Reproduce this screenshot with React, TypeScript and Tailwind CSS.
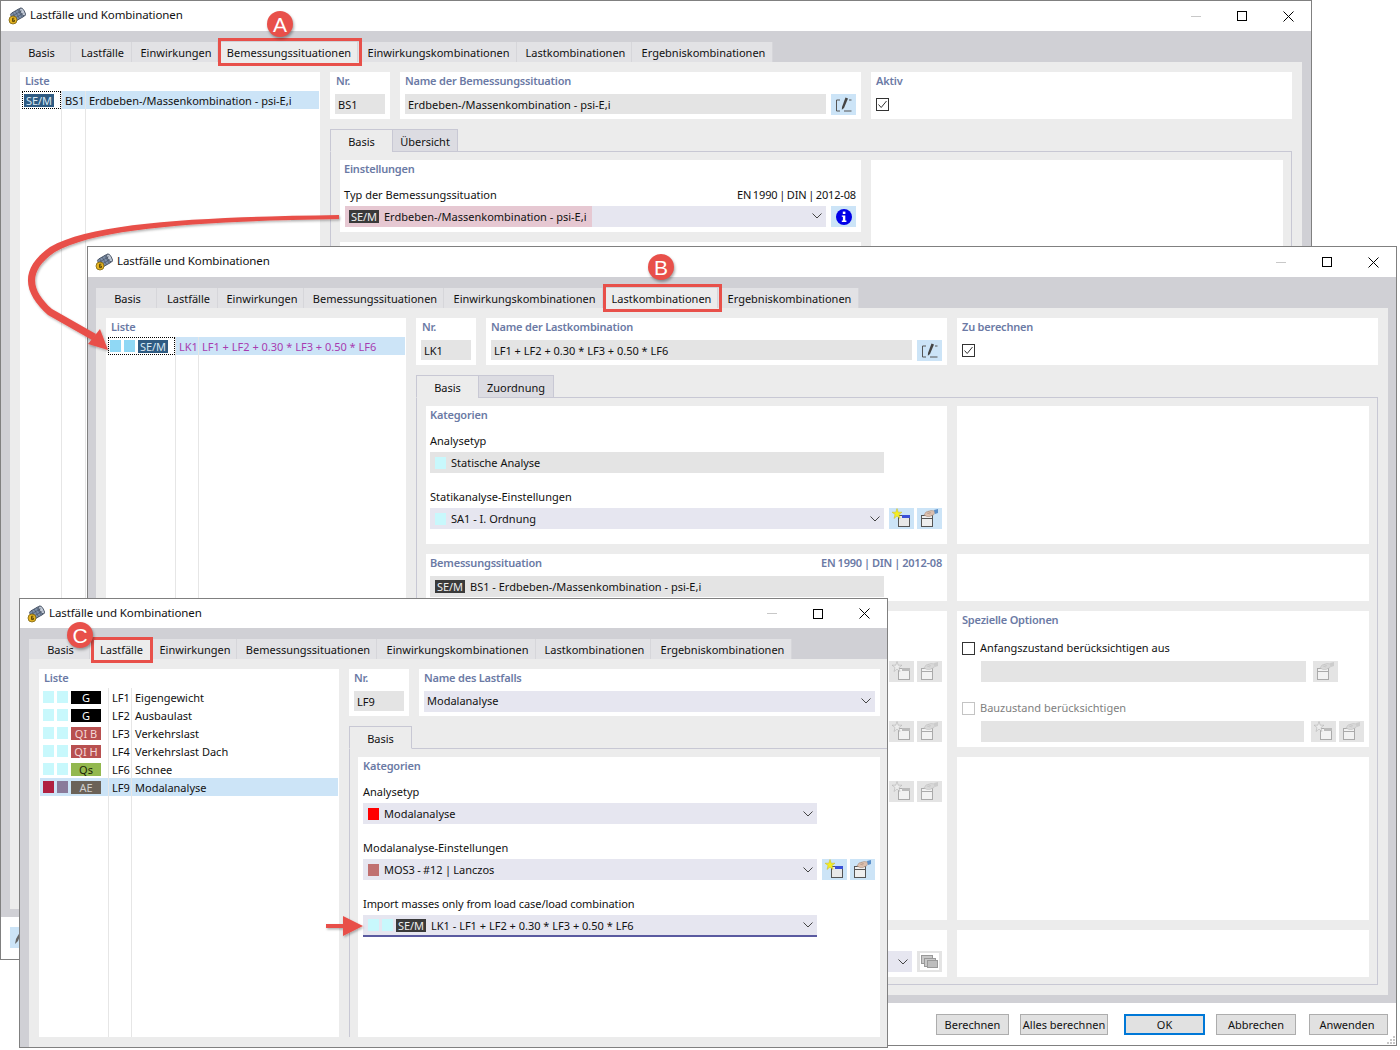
import type { ReactNode } from "react";
import clsx from "clsx";

const tabs = [
  { label: "Basis", width: "w-[61px]" },
  { label: "Lastfälle", width: "w-[61px]" },
  { label: "Einwirkungen", width: "w-[86px]" },
  { label: "Bemessungssituationen", width: "w-[140px]" },
  { label: "Einwirkungskombinationen", width: "w-[159px]" },
  { label: "Lastkombinationen", width: "w-[115px]" },
  { label: "Ergebniskombinationen", width: "w-[141px]" },
];

function AppIcon() {
  return (
    <svg width="18" height="18" viewBox="0 0 18 18" className="shrink-0">
      <g transform="rotate(-30 10 7)">
        <rect x="3" y="3" width="13" height="9" rx="2" fill="#7d8fa8" stroke="#3f4a5c" strokeWidth="0.8" />
        <ellipse cx="15" cy="7.5" rx="2" ry="4.5" fill="#c4ccd8" stroke="#3f4a5c" strokeWidth="0.8" />
        <path d="M6 3v9M9 3v9M12 3v9M3 6h12M3 9h12" stroke="#3f4a5c" strokeWidth="0.5" />
      </g>
      <circle cx="5" cy="13" r="4" fill="#e6b422" stroke="#7a6212" strokeWidth="0.8" />
      <path d="M6.4 11.2H4.6v3.4h1.8v-1.6H4.6" fill="none" stroke="#4a3c08" strokeWidth="0.9" />
    </svg>
  );
}

function Chevron() {
  return (
    <svg width="10" height="6" viewBox="0 0 10 6" className="shrink-0">
      <path d="M0.5 0.5L5 5L9.5 0.5" fill="none" stroke="#444" strokeWidth="1" />
    </svg>
  );
}

function PencilIcon() {
  return (
    <svg width="18" height="16" viewBox="0 0 18 16">
      <path d="M5 3H1.5V14H5M9 14H16.5M14 3H16.5" fill="none" stroke="#555" strokeWidth="1" />
      <path d="M10.5 0.5L13 1.5L9 11L6.8 12.8L7 10Z" fill="#444" />
    </svg>
  );
}

function InfoIcon() {
  return (
    <svg width="16" height="16" viewBox="0 0 16 16">
      <circle cx="8" cy="8" r="8" fill="#0000e8" />
      <rect x="6.8" y="2.6" width="2.6" height="2.4" fill="#fff" />
      <path d="M5.8 6.4H9.3V11.6H10.4V13H5.8V11.6H6.9V7.8H5.8Z" fill="#fff" />
    </svg>
  );
}

function NewIcon({ off }: { off?: boolean }) {
  const line = off ? "#aaa" : "#555";
  return (
    <svg width="25" height="21" viewBox="0 0 25 21">
      <rect x="9.5" y="7.5" width="11" height="11" fill={off ? "#f2f2f2" : "#e8e8e8"} stroke={line} />
      <rect x="13" y="7" width="8" height="3" fill={off ? "#bbb" : "#3a50d8"} />
      <path
        d="M8 0.5L9.2 4.2L13 4.2L10 6.5L11 10.5L8 8L5 10.5L6 6.5L3 4.2L6.8 4.2Z"
        fill={off ? "#ececec" : "#f5ee20"}
        stroke={off ? "#aaa" : "#c8b820"}
        strokeWidth="0.5"
      />
    </svg>
  );
}

function EditWindowIcon({ off }: { off?: boolean }) {
  const line = off ? "#aaa" : "#555";
  return (
    <svg width="25" height="21" viewBox="0 0 25 21">
      <rect x="4.5" y="7.5" width="11" height="11" fill={off ? "#f2f2f2" : "#efefef"} stroke={line} />
      <rect x="5" y="10" width="10" height="1" fill={line} />
      <path d="M7 7L9 4L14 2.5L18 3L17 6.5L13 8.5L10 8.5Z" fill={off ? "#d8d8d8" : "#dcbfae"} stroke={off ? "#bbb" : "#a08674"} strokeWidth="0.5" />
      <path d="M10 5L13 6M11 3.5L14 5" stroke={off ? "#bbb" : "#a08674"} strokeWidth="0.5" />
      <path d="M17 2L21 1V5L18 6Z" fill={off ? "#ccc" : "#5b8fc9"} />
    </svg>
  );
}

function CopyIcon() {
  return (
    <svg width="19" height="17" viewBox="0 0 19 17">
      <rect x="0" y="0" width="19" height="17" fill="#fff" />
      <rect x="1.5" y="2.5" width="11" height="8" fill="#c8c8c8" stroke="#999" />
      <rect x="4.5" y="5.5" width="11" height="8" fill="#c8c8c8" stroke="#999" />
      <rect x="7.5" y="7.5" width="10" height="7" fill="#bdbdbd" stroke="#999" />
    </svg>
  );
}

function Swatch({ color }: { color: string }) {
  return <span className={clsx("mb-[2px] h-[12px] w-[11px] shrink-0", color)} />;
}

function Badge({ className, children }: { className: string; children: ReactNode }) {
  return (
    <span className={clsx("mb-[2px] flex h-[13px] w-[30px] shrink-0 items-center justify-center text-[11px] leading-none", className)}>
      {children}
    </span>
  );
}

function Heading({ className, children }: { className?: string; children: ReactNode }) {
  return (
    <div className={clsx("h-[16px] text-[11px] font-semibold leading-[16px] tracking-[-0.2px] text-[#6b7aa5]", className)}>
      {children}
    </div>
  );
}

function TopHeading({ children }: { children: ReactNode }) {
  return <div className="h-[19px] text-[11px] font-semibold leading-[17px] tracking-[-0.2px] text-[#6b7aa5]">{children}</div>;
}

function Label({ className, children }: { className?: string; children: ReactNode }) {
  return <div className={clsx("h-[16px] leading-[16px]", className)}>{children}</div>;
}

function Box({ className, children }: { className?: string; children?: ReactNode }) {
  return <div className={clsx("flex h-[21px] items-center gap-[5px] bg-[#e4e4e4] pl-[5px] pt-[2px]", className)}>{children}</div>;
}

function Select({ className, children }: { className?: string; children?: ReactNode }) {
  return (
    <div className={clsx("flex h-[21px] items-center gap-[5px] bg-[#e6e6f0] pl-[5px] pr-[4px] pt-[2px]", className)}>
      {children}
      <span className="mb-[2px] ml-auto flex">
        <Chevron />
      </span>
    </div>
  );
}

function IconButton({ off, children }: { off?: boolean; children: ReactNode }) {
  return (
    <div className={clsx("flex h-[21px] w-[25px] shrink-0 items-center justify-center", off ? "bg-[#e4e4e4]" : "bg-[#cce4f7]")}>
      {children}
    </div>
  );
}

function CheckBox({ checked, off }: { checked?: boolean; off?: boolean }) {
  return (
    <span className={clsx("flex h-[13px] w-[13px] shrink-0 items-center justify-center border bg-white", off ? "border-[#c4c4c4]" : "border-[#333]")}>
      {checked && (
        <svg width="11" height="11" viewBox="0 0 11 11">
          <path d="M1.5 5.5L4.2 8.5L9.5 2" fill="none" stroke="#333" strokeWidth="1" />
        </svg>
      )}
    </span>
  );
}

function ListColumn({ className, children }: { className: string; children: ReactNode }) {
  return <div className={clsx("flex flex-col border-r border-[#e6e6e6]", className)}>{children}</div>;
}

function Cell({ selected, className, children }: { selected?: boolean; className?: string; children?: ReactNode }) {
  return (
    <div className={clsx("flex h-[18px] shrink-0 items-center whitespace-nowrap pl-[3px] pt-[2px]", selected && "bg-[#cce4f7]", className)}>
      {children}
    </div>
  );
}

function ListPanel({ padding, children }: { padding: string; children: ReactNode }) {
  return (
    <div className="flex w-[300px] shrink-0 flex-col bg-white">
      <div className="pl-[5px]">
        <TopHeading>Liste</TopHeading>
      </div>
      <div className={clsx("flex min-h-0 flex-1", padding)}>{children}</div>
    </div>
  );
}

function Dialog({
  className,
  active,
  titleHeight = "h-[30px]",
  band,
  footer,
  children,
}: {
  className: string;
  active: number;
  titleHeight?: string;
  band: string;
  footer?: ReactNode;
  children: ReactNode;
}) {
  return (
    <div className={clsx("absolute flex flex-col overflow-hidden border border-[#808080] bg-white", className)}>
      <div className={clsx("flex shrink-0 items-center bg-white pl-[7px]", titleHeight)}>
        <AppIcon />
        <span className="mb-[2px] ml-[4px] text-[11.5px] tracking-[-0.1px]">Lastfälle und Kombinationen</span>
        <div className="ml-auto flex items-center">
          <span className="flex w-[46px] justify-center">
            <span className="h-px w-[10px] bg-[#c8c8c8]" />
          </span>
          <span className="flex w-[46px] justify-center">
            <span className="h-[10px] w-[10px] border border-black" />
          </span>
          <span className="flex w-[46px] justify-center">
            <svg width="11" height="11" viewBox="0 0 11 11">
              <path d="M0.5 0.5L10.5 10.5M10.5 0.5L0.5 10.5" stroke="#000" strokeWidth="1" />
            </svg>
          </span>
        </div>
      </div>
      <div className={clsx("flex min-h-0 flex-1 flex-col bg-[#d0d0d5] pt-[11px]", band)}>
        <div className="flex h-[20px] shrink-0">
          {tabs.map((tab, i) => (
            <div
              key={tab.label}
              className={clsx(
                "flex shrink-0 items-center justify-center border-r border-[#d6d6da] pl-[3px] pt-[2px]",
                tab.width,
                i === active ? "bg-[#ececec]" : "bg-[#e2e2e5]"
              )}
            >
              {tab.label}
            </div>
          ))}
        </div>
        <div className="flex min-h-0 flex-1 gap-[10px] bg-[#ececec] py-[10px] pl-[10px]">{children}</div>
      </div>
      {footer}
    </div>
  );
}

function SubTabs({ items }: { items: { label: string; width: string }[] }) {
  return (
    <div className="relative z-10 -mb-px flex h-[23px] shrink-0">
      {items.map((item, i) => (
        <div
          key={item.label}
          className={clsx(
            "flex items-center justify-center border border-[#c8c8d4] pt-[4px]",
            item.width,
            i === 0 ? "border-b-[#ececec] bg-[#ececec]" : "-ml-px bg-[#dcdce2]"
          )}
        >
          {item.label}
        </div>
      ))}
    </div>
  );
}

function WindowA() {
  return (
    <Dialog
      className="left-0 top-0 h-[960px] w-[1312px]"
      active={3}
      band="px-[9px] pb-[8px]"
      footer={
        <div className="h-[42px] shrink-0 bg-white pl-[9px] pt-[10px]">
          <div className="flex h-[21px] w-[25px] items-center justify-end bg-[#cce4f7] pr-[14px]">
            <svg width="6" height="12" viewBox="0 0 6 12">
              <path d="M5 0L6 1L3 9L0 12L1 7Z" fill="#666" />
            </svg>
          </div>
        </div>
      }
    >
      <ListPanel padding="pl-[2px] pr-[1px]">
        <ListColumn className="w-[40px]">
          <div className="flex h-[18px] items-center border border-dotted border-black pl-px pt-[2px]">
            <Badge className="bg-[#2f5b82] text-[#d8e8f4]">SE/M</Badge>
          </div>
        </ListColumn>
        <ListColumn className="w-[24px]">
          <Cell selected>BS1</Cell>
        </ListColumn>
        <div className="flex flex-1 flex-col">
          <Cell selected>Erdbeben-/Massenkombination - psi-E,i</Cell>
        </div>
      </ListPanel>
      <div className="flex w-[962px] shrink-0 flex-col">
        <div className="flex h-[47px] shrink-0 gap-[10px]">
          <div className="w-[60px] bg-white px-[5px] pl-[6px]">
            <TopHeading>Nr.</TopHeading>
            <Box className="-ml-px mt-[3px] !h-[20px] !pl-[3px]">BS1</Box>
          </div>
          <div className="w-[461px] bg-white px-[5px]">
            <TopHeading>Name der Bemessungssituation</TopHeading>
            <div className="mt-[3px] flex gap-[5px]">
              <Box className="!h-[20px] w-[421px] !pl-[3px]">Erdbeben-/Massenkombination - psi-E,i</Box>
              <IconButton>
                <PencilIcon />
              </IconButton>
            </div>
          </div>
          <div className="w-[421px] bg-white px-[5px]">
            <TopHeading>Aktiv</TopHeading>
            <div className="mt-[7px]">
              <CheckBox checked />
            </div>
          </div>
        </div>
        <div className="mt-[10px] flex min-h-0 flex-1 flex-col">
          <SubTabs
            items={[
              { label: "Basis", width: "w-[63px]" },
              { label: "Übersicht", width: "w-[66px]" },
            ]}
          />
          <div className="flex min-h-0 flex-1 gap-[10px] border border-[#c8c8d4] pb-[8px] pl-[9px] pr-[8px] pt-[8px]">
            <div className="flex w-[521px] flex-col gap-[10px]">
              <div className="h-[72px] shrink-0 bg-white px-[4px] pt-px">
                <Heading>Einstellungen</Heading>
                <div className="mt-[10px] flex justify-between pr-px">
                  <Label>Typ der Bemessungssituation</Label>
                  <Label className="tracking-[-0.15px] [word-spacing:-1px]">EN 1990 | DIN | 2012-08</Label>
                </div>
                <div className="mt-[3px] flex gap-[5px] pl-px">
                  <Select className="relative w-[481px] !pl-0 !pt-0">
                    <div className="flex h-[21px] w-[247px] items-center gap-[5px] bg-[#e6c8d2] pl-[4px] pt-[2px]">
                      <Badge className="bg-[#3a3a3a] text-[#eee]">SE/M</Badge>
                      Erdbeben-/Massenkombination - psi-E,i
                    </div>
                  </Select>
                  <IconButton>
                    <InfoIcon />
                  </IconButton>
                </div>
              </div>
              <div className="flex-1 bg-white" />
            </div>
            <div className="w-[412px] bg-white" />
          </div>
        </div>
      </div>
    </Dialog>
  );
}

function WindowB() {
  const footerButton = "flex h-[21px] items-center justify-center border border-[#adadad] bg-[#e1e1e1] pt-[2px]";
  return (
    <Dialog
      className="left-[87px] top-[246px] h-[800px] w-[1310px]"
      active={5}
      band="px-[8px] pb-[8px]"
      footer={
        <div className="relative flex h-[42px] shrink-0 justify-end bg-white pr-[8px] pt-[11px]">
          <div className={clsx(footerButton, "w-[73px]")}>Berechnen</div>
          <div className={clsx(footerButton, "ml-[11px] w-[88px]")}>Alles berechnen</div>
          <div className="ml-[16px] flex h-[21px] w-[81px] items-center justify-center border-2 border-[#0078d7] bg-[#e1e1e1] pt-[2px]">OK</div>
          <div className={clsx(footerButton, "ml-[11px] w-[80px]")}>Abbrechen</div>
          <div className={clsx(footerButton, "ml-[13px] w-[79px] pr-[3px]")}>Anwenden</div>
          <svg width="9" height="9" viewBox="0 0 9 9" className="absolute bottom-px right-px">
            <path d="M7 1h2v2H7zM4 4h2v2H4zM7 4h2v2H7zM1 7h2v2H1zM4 7h2v2H4zM7 7h2v2H7z" fill="#c8c8c8" />
          </svg>
        </div>
      }
    >
      <ListPanel padding="pl-[2px] pr-px">
        <ListColumn className="w-[68px]">
          <div className="flex h-[18px] items-center gap-[3px] border border-dotted border-black pl-px pt-[2px]">
            <Swatch color="bg-[#90d8f5]" />
            <Swatch color="bg-[#90d8f5]" />
            <Badge className="bg-[#2f5b82] text-[#d8e8f4]">SE/M</Badge>
          </div>
        </ListColumn>
        <ListColumn className="w-[23px]">
          <Cell selected className="text-[#a83cb0]">
            LK1
          </Cell>
        </ListColumn>
        <div className="flex flex-1 flex-col">
          <Cell selected className="text-[#a83cb0]">
            LF1 + LF2 + 0.30 * LF3 + 0.50 * LF6
          </Cell>
        </div>
      </ListPanel>
      <div className="flex w-[962px] shrink-0 flex-col">
        <div className="flex h-[47px] shrink-0 gap-[10px]">
          <div className="w-[60px] bg-white px-[5px] pl-[6px]">
            <TopHeading>Nr.</TopHeading>
            <Box className="-ml-px mt-[3px] !h-[20px] !pl-[3px]">LK1</Box>
          </div>
          <div className="w-[461px] bg-white px-[5px]">
            <TopHeading>Name der Lastkombination</TopHeading>
            <div className="mt-[3px] flex gap-[5px]">
              <Box className="!h-[20px] w-[421px] !pl-[3px]">LF1 + LF2 + 0.30 * LF3 + 0.50 * LF6</Box>
              <IconButton>
                <PencilIcon />
              </IconButton>
            </div>
          </div>
          <div className="w-[421px] bg-white px-[5px]">
            <TopHeading>Zu berechnen</TopHeading>
            <div className="mt-[7px]">
              <CheckBox checked />
            </div>
          </div>
        </div>
        <div className="mt-[10px] flex min-h-0 flex-1 flex-col">
          <SubTabs
            items={[
              { label: "Basis", width: "w-[63px]" },
              { label: "Zuordnung", width: "w-[76px]" },
            ]}
          />
          <div className="flex min-h-0 flex-1 gap-[10px] border border-[#c8c8d4] pb-[7px] pl-[9px] pr-[8px] pt-[8px]">
            <div className="flex w-[521px] flex-col gap-[10px]">
              <div className="h-[138px] shrink-0 bg-white px-[4px] pt-px">
                <Heading>Kategorien</Heading>
                <Label className="mt-[10px]">Analysetyp</Label>
                <Box className="mt-[3px] w-[454px]">
                  <Swatch color="bg-[#c8f8fc]" />
                  Statische Analyse
                </Box>
                <Label className="mt-[16px]">Statikanalyse-Einstellungen</Label>
                <div className="mt-[3px] flex gap-[3px]">
                  <Select className="mr-[2px] w-[454px]">
                    <Swatch color="bg-[#c8f8fc]" />
                    SA1 - I. Ordnung
                  </Select>
                  <IconButton>
                    <NewIcon />
                  </IconButton>
                  <IconButton>
                    <EditWindowIcon />
                  </IconButton>
                </div>
              </div>
              <div className="h-[47px] shrink-0 bg-white px-[4px] pt-px">
                <div className="flex justify-between pr-px">
                  <Heading>Bemessungssituation</Heading>
                  <Heading className="[word-spacing:-0.6px]">EN 1990 | DIN | 2012-08</Heading>
                </div>
                <Box className="mt-[5px] w-[454px]">
                  <Badge className="bg-[#3a3a3a] text-[#eee]">SE/M</Badge>
                  BS1 - Erdbeben-/Massenkombination - psi-E,i
                </Box>
              </div>
              <div className="flex h-[309px] shrink-0 flex-col items-end gap-[39px] bg-white pr-[5px] pt-[50px]">
                {[0, 1, 2].map((row) => (
                  <div key={row} className="flex gap-[3px]">
                    <IconButton off>
                      <NewIcon off />
                    </IconButton>
                    <IconButton off>
                      <EditWindowIcon off />
                    </IconButton>
                  </div>
                ))}
              </div>
              <div className="flex flex-1 items-end justify-end gap-[5px] bg-white pb-[5px] pr-[5px]">
                <Select className="w-[454px]" />
                <IconButton off>
                  <CopyIcon />
                </IconButton>
              </div>
            </div>
            <div className="flex w-[412px] flex-col gap-[10px]">
              <div className="h-[138px] shrink-0 bg-white" />
              <div className="h-[47px] shrink-0 bg-white" />
              <div className="h-[136px] shrink-0 bg-white px-[5px] pt-px">
                <Heading>Spezielle Optionen</Heading>
                <div className="mt-[12px] flex h-[16px] items-center gap-[5px]">
                  <CheckBox />
                  Anfangszustand berücksichtigen aus
                </div>
                <div className="mt-[5px] flex gap-[7px] pl-[19px]">
                  <Box className="w-[325px]" />
                  <IconButton off>
                    <EditWindowIcon off />
                  </IconButton>
                </div>
                <div className="mt-[18px] flex h-[16px] items-center gap-[5px] text-[#808080]">
                  <CheckBox off />
                  Bauzustand berücksichtigen
                </div>
                <div className="mt-[5px] flex gap-[7px] pl-[19px]">
                  <Box className="w-[325px]" />
                  <div className="flex gap-[3px]">
                    <IconButton off>
                      <NewIcon off />
                    </IconButton>
                    <IconButton off>
                      <EditWindowIcon off />
                    </IconButton>
                  </div>
                </div>
              </div>
              <div className="h-[163px] shrink-0 bg-white" />
              <div className="flex-1 bg-white" />
            </div>
          </div>
        </div>
      </div>
    </Dialog>
  );
}

const loadCases = [
  { id: "LF1", name: "Eigengewicht", code: "G", badge: "bg-black text-white" },
  { id: "LF2", name: "Ausbaulast", code: "G", badge: "bg-black text-white" },
  { id: "LF3", name: "Verkehrslast", code: "QI B", badge: "bg-[#b85050] text-[#f4d8d8]" },
  { id: "LF4", name: "Verkehrslast Dach", code: "QI H", badge: "bg-[#b85050] text-[#f4d8d8]" },
  { id: "LF6", name: "Schnee", code: "Qs", badge: "bg-[#93b84f] text-[#1c2408]" },
  { id: "LF9", name: "Modalanalyse", code: "AE", badge: "bg-[#6b6258] text-[#d0d0d0]" },
];

function WindowC() {
  return (
    <Dialog
      className="left-[19px] top-[598px] h-[450px] w-[869px]"
      active={1}
      titleHeight="h-[29px]"
      band="pl-[9px]"
    >
      <ListPanel padding="pl-px pr-px">
        <ListColumn className="w-[69px]">
          {loadCases.map((lc) => {
            const selected = lc.id === "LF9";
            return (
              <Cell key={lc.id} selected={selected} className="gap-[3px]">
                <Swatch color={selected ? "bg-[#b02040]" : "bg-[#c8f8fc]"} />
                <Swatch color={selected ? "bg-[#8a7a9a]" : "bg-[#c8f8fc]"} />
                <Badge className={lc.badge}>{lc.code}</Badge>
              </Cell>
            );
          })}
        </ListColumn>
        <ListColumn className="w-[23px]">
          {loadCases.map((lc) => (
            <Cell key={lc.id} selected={lc.id === "LF9"}>
              {lc.id}
            </Cell>
          ))}
        </ListColumn>
        <div className="flex flex-1 flex-col">
          {loadCases.map((lc) => (
            <Cell key={lc.id} selected={lc.id === "LF9"}>
              {lc.name}
            </Cell>
          ))}
        </div>
      </ListPanel>
      <div className="flex w-[538px] shrink-0 flex-col">
        <div className="flex h-[47px] shrink-0 gap-[10px]">
          <div className="w-[60px] bg-white px-[5px]">
            <TopHeading>Nr.</TopHeading>
            <Box className="mt-[3px] !h-[20px] !pl-[3px]">LF9</Box>
          </div>
          <div className="w-[461px] bg-white px-[5px]">
            <TopHeading>Name des Lastfalls</TopHeading>
            <Select className="mt-[3px] !pl-[3px] !pt-0">Modalanalyse</Select>
          </div>
        </div>
        <div className="mt-[10px] flex min-h-0 flex-1 flex-col">
          <SubTabs items={[{ label: "Basis", width: "w-[63px]" }]} />
          <div className="flex min-h-0 flex-1 border-l border-t border-[#c8c8d4] pl-[8px] pt-[8px]">
            <div className="h-full w-[522px] bg-white px-[5px] pt-px">
              <Heading>Kategorien</Heading>
              <Label className="mt-[10px]">Analysetyp</Label>
              <Select className="mt-[3px] w-[454px]">
                <Swatch color="bg-[#ff0000]" />
                Modalanalyse
              </Select>
              <Label className="mt-[16px]">Modalanalyse-Einstellungen</Label>
              <div className="mt-[3px] flex gap-[3px]">
                <Select className="mr-[2px] w-[454px]">
                  <Swatch color="bg-[#c07070]" />
                  <span className="[word-spacing:-0.6px]">MOS3 - #12 | Lanczos</span>
                </Select>
                <IconButton>
                  <NewIcon />
                </IconButton>
                <IconButton>
                  <EditWindowIcon />
                </IconButton>
              </div>
              <Label className="mt-[16px] tracking-[-0.08px]">Import masses only from load case/load combination</Label>
              <Select className="mt-[3px] !h-[22px] w-[454px] !gap-[3px] border-b-2 border-[#5a5aa0]">
                <Swatch color="bg-[#c8f8fc]" />
                <Swatch color="bg-[#c8f8fc]" />
                <Badge className="bg-[#3a3a3a] text-[#eee]">SE/M</Badge>
                <span className="ml-[2px]">LK1 - LF1 + LF2 + 0.30 * LF3 + 0.50 * LF6</span>
              </Select>
            </div>
          </div>
        </div>
      </div>
    </Dialog>
  );
}

function Marker({ className, children }: { className: string; children: ReactNode }) {
  return (
    <div
      className={clsx(
        "absolute flex h-[26px] w-[26px] items-center justify-center rounded-full bg-[#e8504a] font-['Liberation_Sans',sans-serif] text-[21px] leading-none text-white shadow-[1px_2px_3px_rgba(0,0,0,0.35)]",
        className
      )}
    >
      {children}
    </div>
  );
}

export default function App() {
  return (
    <div className="relative h-[1050px] w-[1400px] overflow-hidden bg-white font-['Noto_Sans',sans-serif] text-[11px] text-[#111]">
      <WindowA />
      <WindowB />
      <WindowC />

      {/* annotations */}
      <div className="absolute left-[218px] top-[38px] h-[28px] w-[144px] border-[3px] border-[#e8504a]" />
      <div className="absolute left-[603px] top-[284px] h-[28px] w-[119px] border-[3px] border-[#e8504a]" />
      <div className="absolute left-[91px] top-[637px] h-[26px] w-[62px] border-[3px] border-[#e8504a]" />
      <Marker className="left-[267px] top-[11px]">A</Marker>
      <Marker className="left-[648px] top-[254px]">B</Marker>
      <Marker className="left-[67px] top-[622px]">C</Marker>
      <svg width="1400" height="1050" viewBox="0 0 1400 1050" className="pointer-events-none absolute left-0 top-0">
        <defs>
          <filter id="arrow-shadow" x="-10%" y="-10%" width="120%" height="120%">
            <feDropShadow dx="1" dy="1.5" stdDeviation="1.2" floodColor="#000" floodOpacity="0.3" />
          </filter>
        </defs>
        <g filter="url(#arrow-shadow)" fill="#e8504a">
          <path d="M339 215C210 217 95 221 50 247C17 270 25 295 48 315L92 340L96 334L52 309C32 291 26 272 55 252C98 227 210 221 339 219Z" />
          <path d="M88 344L100 329L108 350Z" />
          <path d="M326 924H343V916L363 926L343 936V928H326Z" />
        </g>
      </svg>
    </div>
  );
}
